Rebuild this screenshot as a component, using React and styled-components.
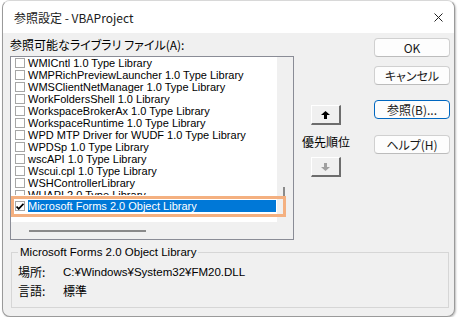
import styled, { createGlobalStyle } from 'styled-components'

const GlobalStyle = createGlobalStyle`
  html, body {
    margin: 0;
    background: #ffffff;
  }
  body {
    font-family: "Noto Sans CJK JP", "Liberation Sans", sans-serif;
    font-feature-settings: "palt";
    color: #000;
  }
`

const Window = styled.div`
  box-sizing: border-box;
  width: 453px;
  height: 317px;
  margin-left: 2px;
  border: 1px solid #9a9a9a;
  border-top-color: #d8d8d8;
  border-radius: 8px;
  overflow: hidden;
  display: flex;
  flex-direction: column;
  background: #f0f0f0;
  box-shadow: 1px 1px 2px rgba(0, 0, 0, 0.25);
`

const TitleBar = styled.div`
  height: 32px;
  flex: none;
  background: #ffffff;
  display: flex;
  align-items: center;
  justify-content: space-between;
  padding: 0 6px 0 11px;
  font-size: 12px;
  color: #1a1a1a;
`

const CloseIcon = styled.svg`
  width: 9px;
  height: 9px;
  margin-right: 5px;
`

const Body = styled.div`
  flex: 1;
  padding: 4px 0 0 7px;
  display: flex;
  flex-direction: column;
`

const TopRow = styled.div`
  display: flex;
  align-items: flex-start;
`

const LeftCol = styled.div`
  width: 284px;
  display: flex;
  flex-direction: column;
`

const Label = styled.div`
  font-size: 12px;
  line-height: 16px;
  height: 16px;
  margin-bottom: 3px;
`

const ListBox = styled.div`
  position: relative;
  box-sizing: border-box;
  height: 184px;
  border: 1px solid #8a8c96;
  display: flex;
  flex-direction: column;
`

const ListMain = styled.div`
  height: 165px;
  display: flex;
`

const Items = styled.div`
  flex: 1;
  background: #ffffff;
  overflow: hidden;
  font-family: "Liberation Sans", sans-serif;
  font-size: 11px;
`

const Row = styled.div`
  height: ${p => p.$h || 12}px;
  overflow: hidden;
  display: flex;
  align-items: ${p => (p.$clip ? 'flex-start' : 'center')};
  padding-left: 4px;
  white-space: nowrap;
`

const Check = styled.span`
  box-sizing: border-box;
  flex: none;
  width: 10px;
  height: 10px;
  margin: ${p => (p.$clip ? '1px' : '0')} 3px 0 0;
  border: 1px solid #a6a6a6;
  background: #fff;
  display: flex;
  align-items: center;
  justify-content: center;
`

const ItemText = styled.span`
  line-height: 12px;
  height: 12px;
  padding-right: ${p => (p.$selected ? '0' : '1px')};
  ${p => p.$selected && `
    background: #0078d7;
    color: #ffffff;
    flex: 1;
    margin-right: 1px;
  `}
`

const VTrack = styled.div`
  width: 16px;
  background: #f0f0f0;
  position: relative;
`

const VThumb = styled.div`
  position: absolute;
  left: 6px;
  top: 130px;
  width: 2px;
  height: 9px;
  background: #8a8a8a;
`

const HTrack = styled.div`
  height: 17px;
  background: #f0f0f0;
  display: flex;
  align-items: center;
  padding-left: 18px;
`

const HThumb = styled.div`
  width: 117px;
  height: 2px;
  background: #8a8a8a;
`

const Marker = styled.div`
  position: absolute;
  left: 0;
  top: 139px;
  width: 275px;
  height: 21px;
  border: 3px solid #f4b080;
  box-sizing: border-box;
  pointer-events: none;
`

const MidCol = styled.div`
  width: 50px;
  margin: 68px 0 0 7px;
  display: flex;
  flex-direction: column;
  align-items: center;
`

const ArrowBtn = styled.div`
  box-sizing: border-box;
  width: 30px;
  height: 20px;
  background: #f0f0f0;
  border-top: 1px solid #ffffff;
  border-left: 1px solid #ffffff;
  border-right: 2px solid #6d6d6d;
  border-bottom: 2px solid #6d6d6d;
  display: flex;
  align-items: center;
  justify-content: center;
  color: ${p => (p.$disabled ? '#a0a0a0' : '#000')};
`

const Priority = styled.div`
  font-size: 12px;
  line-height: 16px;
  margin: 9px 0 7px;
`

const RightCol = styled.div`
  width: 76px;
  margin: 1px 0 0 23px;
  display: flex;
  flex-direction: column;
`

const Button = styled.div`
  box-sizing: border-box;
  height: 19px;
  margin-top: ${p => p.$gap || 0}px;
  border: 1px solid ${p => (p.$focused ? '#0067c0' : '#d0d0d0')};
  border-bottom-color: ${p => (p.$focused ? '#0067c0' : '#bcbcbc')};
  border-radius: 4px;
  background: #fdfdfd;
  font-size: 12px;
  display: flex;
  align-items: center;
  justify-content: center;
  color: #1a1a1a;
`

const Group = styled.fieldset`
  box-sizing: border-box;
  width: 438px;
  margin: 5px 0 0 1px;
  padding: 3px 6px 7px 6px;
  border: 1px solid #d6d6d6;
  font-size: 12px;
`

const Legend = styled.legend`
  padding: 0 2px;
  margin-left: 0;
  font-family: "Liberation Sans", sans-serif;
  font-size: 11.5px;
  line-height: 14px;
`

const InfoRow = styled.div`
  display: flex;
  height: 19px;
  align-items: center;
`

const InfoKey = styled.span`
  width: 45px;
`

const InfoVal = styled.span`
  font-family: ${p => (p.$latin ? '"Liberation Sans", sans-serif' : 'inherit')};
  font-size: ${p => (p.$latin ? '11.5px' : '12px')};
`

const libraries = [
  'WMICntl 1.0 Type Library',
  'WMPRichPreviewLauncher 1.0 Type Library',
  'WMSClientNetManager 1.0 Type Library',
  'WorkFoldersShell 1.0 Library',
  'WorkspaceBrokerAx 1.0 Type Library',
  'WorkspaceRuntime 1.0 Type Library',
  'WPD MTP Driver for WUDF 1.0 Type Library',
  'WPDSp 1.0 Type Library',
  'wscAPI 1.0 Type Library',
  'Wscui.cpl 1.0 Type Library',
  'WSHControllerLibrary',
]

function Arrow({ down }) {
  return (
    <svg width="9" height="8" viewBox="0 0 9 8">
      <path
        d={down ? 'M3 0h3v4h3L4.5 8 0 4h3z' : 'M3 8h3V4h3L4.5 0 0 4h3z'}
        fill="currentColor"
      />
    </svg>
  )
}

export default function App() {
  return (
    <Window>
      <GlobalStyle />
      <TitleBar>
        <span>参照設定 - VBAProject</span>
        <CloseIcon viewBox="0 0 9 9">
          <path d="M0.5 0.5l8 8M8.5 0.5l-8 8" stroke="#222" strokeWidth="1" />
        </CloseIcon>
      </TitleBar>
      <Body>
        <TopRow>
          <LeftCol>
            <Label>参照可能なライブラリ ファイル(A):</Label>
            <ListBox>
              <ListMain>
                <Items>
                  {libraries.map(name => (
                    <Row key={name}>
                      <Check />
                      <ItemText>{name}</ItemText>
                    </Row>
                  ))}
                  {/* partly hidden row, cut as in the dialog */}
                  <Row $h={6} $clip>
                    <Check $clip />
                    <ItemText>WUAPI 2.0 Type Library</ItemText>
                  </Row>
                  <Row $h={22}>
                    <Check>
                      <svg width="8" height="7" viewBox="0 0 8 7">
                        <path d="M0.5 3.5l2.2 2.3L7.5 0.8" stroke="#000" strokeWidth="1.8" fill="none" />
                      </svg>
                    </Check>
                    <ItemText $selected>Microsoft Forms 2.0 Object Library</ItemText>
                  </Row>
                </Items>
                <VTrack>
                  <VThumb />
                </VTrack>
              </ListMain>
              <HTrack>
                <HThumb />
              </HTrack>
              <Marker />
            </ListBox>
          </LeftCol>
          <MidCol>
            <ArrowBtn>
              <Arrow />
            </ArrowBtn>
            <Priority>優先順位</Priority>
            <ArrowBtn $disabled>
              <Arrow down />
            </ArrowBtn>
          </MidCol>
          <RightCol>
            <Button>OK</Button>
            <Button $gap={9}>キャンセル</Button>
            <Button $gap={15} $focused>参照(B)...</Button>
            <Button $gap={16}>ヘルプ(H)</Button>
          </RightCol>
        </TopRow>
        <Group>
          <Legend>Microsoft Forms 2.0 Object Library</Legend>
          <InfoRow>
            <InfoKey>場所:</InfoKey>
            <InfoVal $latin>C:¥Windows¥System32¥FM20.DLL</InfoVal>
          </InfoRow>
          <InfoRow>
            <InfoKey>言語:</InfoKey>
            <InfoVal>標準</InfoVal>
          </InfoRow>
        </Group>
      </Body>
    </Window>
  )
}
